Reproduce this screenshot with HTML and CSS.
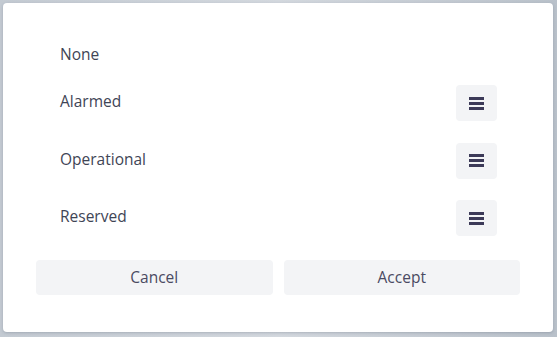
FILE: index.html
```html
<!DOCTYPE html>
<html lang="en">
<head>
<meta charset="utf-8">
<title>Status</title>
<link rel="stylesheet" href="styles.css">
</head>
<body>
<div class="dialog">
  <ul class="options">
    <li class="option"><span class="label">None</span></li>
    <li class="option"><span class="label">Alarmed</span>
      <button class="menu-btn" aria-label="Menu"><svg width="15" height="13" viewBox="0 0 15 13"><rect x="0" y="0" width="15" height="3"/><rect x="0" y="5" width="15" height="3"/><rect x="0" y="10" width="15" height="3"/></svg></button></li>
    <li class="option"><span class="label">Operational</span>
      <button class="menu-btn" aria-label="Menu"><svg width="15" height="13" viewBox="0 0 15 13"><rect x="0" y="0" width="15" height="3"/><rect x="0" y="5" width="15" height="3"/><rect x="0" y="10" width="15" height="3"/></svg></button></li>
    <li class="option"><span class="label">Reserved</span>
      <button class="menu-btn" aria-label="Menu"><svg width="15" height="13" viewBox="0 0 15 13"><rect x="0" y="0" width="15" height="3"/><rect x="0" y="5" width="15" height="3"/><rect x="0" y="10" width="15" height="3"/></svg></button></li>
  </ul>
  <div class="actions">
    <button class="action">Cancel</button>
    <button class="action">Accept</button>
  </div>
</div>
</body>
</html>
```
FILE: styles.css
```css
html, body {
  margin: 0;
  padding: 0;
}
body {
  width: 557px;
  height: 337px;
  background: linear-gradient(90deg, #c3cad2 0%, #d3d8de 50%, #b9c1ca 100%);
  font-family: "Open Sans", "Noto Sans", sans-serif;
  padding: 3px 4px 5px 3px;
  box-sizing: border-box;
}
.dialog {
  background: #ffffff;
  border-radius: 4px;
  height: 329px;
  box-sizing: border-box;
  padding: 41.5px 33px 0 33px;
  display: flex;
  flex-direction: column;
  box-shadow: 0 1px 3px rgba(60, 70, 90, 0.25);
}
.options {
  list-style: none;
  margin: 0;
  padding: 0 23px 0 24px;
  display: flex;
  flex-direction: column;
  gap: 21.5px;
}
.option {
  display: flex;
  align-items: center;
  justify-content: space-between;
}
.label {
  font-size: 15.5px;
  line-height: 19px;
  color: #3f4556;
  padding-bottom: 3px;
}
.option:first-child .label {
  padding-bottom: 0;
}
.menu-btn {
  width: 41px;
  height: 36px;
  border: none;
  border-radius: 4px;
  background: #f3f4f6;
  display: flex;
  align-items: center;
  justify-content: center;
  padding: 0;
}
.menu-btn svg {
  fill: #3c3a58;
  display: block;
}
.actions {
  display: flex;
  gap: 11px;
  margin-top: 24px;
}
.action {
  flex: 1;
  height: 35px;
  border: none;
  border-radius: 4px;
  background: #f3f4f6;
  font-family: "Open Sans", "Noto Sans", sans-serif;
  font-size: 15.5px;
  color: #4a4a62;
  padding: 0 0 2px 0;
}
```
